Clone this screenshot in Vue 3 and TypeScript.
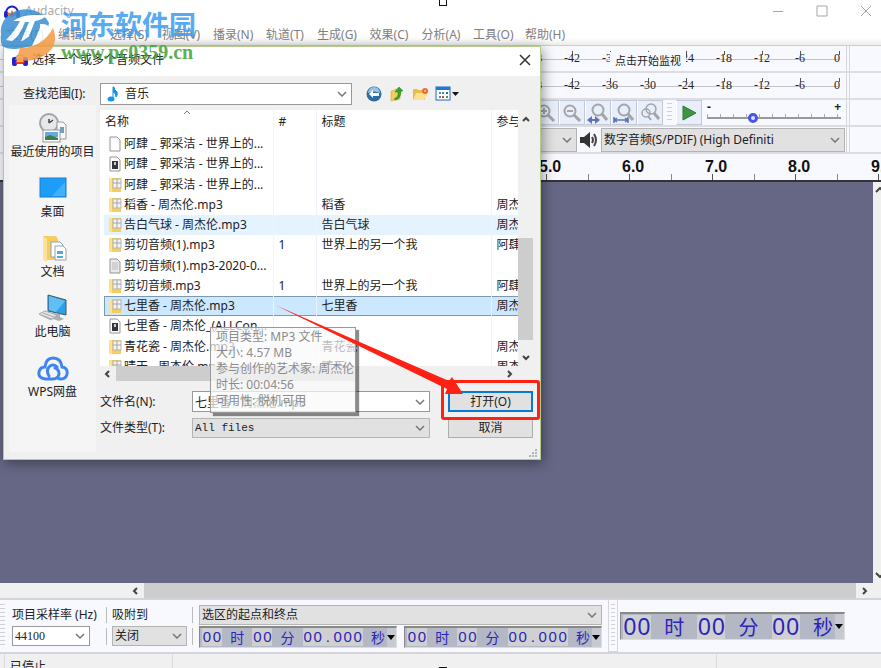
<script setup lang="ts">
import { ref } from 'vue'

type FileKind = 'blank' | 'lyric' | 'text' | 'audio'

interface FileRow {
  name: string
  kind: FileKind
  num: string
  title: string
  artist: string
  state?: 'hover' | 'selected'
}

const menus: string[] = ['文件(F)', '编辑(E)', '选择(S)', '视图(V)', '播录(N)', '轨道(T)', '生成(G)', '效果(C)', '分析(A)', '工具(O)', '帮助(H)']
const levels: string[] = ['-54', '-48', '-42', '-36', '-30', '-24', '-18', '-12', '-6', '0']
const seconds: string[] = ['0.0', '1.0', '2.0', '3.0', '4.0', '5.0', '6.0', '7.0', '8.0', '9.0']
const zooms: string[] = ['in', 'out', 'selection', 'fit', 'toggle']
const places: { id: string; label: string }[] = [
  { id: 'recent', label: '最近使用的项目' },
  { id: 'desktop', label: '桌面' },
  { id: 'documents', label: '文档' },
  { id: 'computer', label: '此电脑' },
  { id: 'cloud', label: 'WPS网盘' },
]

const files: FileRow[] = [
  { name: '阿肆 _ 郭采洁 - 世界上的...', kind: 'blank', num: '', title: '', artist: '' },
  { name: '阿肆 _ 郭采洁 - 世界上的...', kind: 'lyric', num: '', title: '', artist: '' },
  { name: '阿肆 _ 郭采洁 - 世界上的...', kind: 'audio', num: '', title: '', artist: '' },
  { name: '稻香 - 周杰伦.mp3', kind: 'audio', num: '', title: '稻香', artist: '周杰伦' },
  { name: '告白气球 - 周杰伦.mp3', kind: 'audio', num: '', title: '告白气球', artist: '周杰伦', state: 'hover' },
  { name: '剪切音频(1).mp3', kind: 'audio', num: '1', title: '世界上的另一个我', artist: '阿肆' },
  { name: '剪切音频(1).mp3-2020-0...', kind: 'text', num: '', title: '', artist: '' },
  { name: '剪切音频.mp3', kind: 'audio', num: '1', title: '世界上的另一个我', artist: '阿肆' },
  { name: '七里香 - 周杰伦.mp3', kind: 'audio', num: '', title: '七里香', artist: '周杰伦', state: 'selected' },
  { name: '七里香 - 周杰伦_(ALLCon...', kind: 'lyric', num: '', title: '', artist: '' },
  { name: '青花瓷 - 周杰伦.mp3', kind: 'audio', num: '', title: '青花瓷', artist: '周杰伦' },
  { name: '晴天 - 周杰伦.mp3', kind: 'audio', num: '', title: '晴天', artist: '周杰伦' },
]

const details: string[] = ['项目类型: MP3 文件', '大小: 4.57 MB', '参与创作的艺术家: 周杰伦', '时长: 00:04:56', '可用性: 脱机可用']

interface TimePart {
  digits: string
  unit: string
}
const rangeTime: TimePart[] = [
  { digits: '00', unit: '时' },
  { digits: '00', unit: '分' },
  { digits: '00.000', unit: '秒' },
]
const positionTime: TimePart[] = [
  { digits: '00', unit: '时' },
  { digits: '00', unit: '分' },
  { digits: '00', unit: '秒' },
]

const fileName = ref('七里香 - 周杰伦.mp3')
const speed = ref(33)
</script>

<template>
  <main class="app">
    <header class="titlebar">
      <svg class="app-icon" viewBox="0 0 16 16" width="16" height="16">
        <path d="M2 10a6 6.500 0 0 1 12 0" fill="none" stroke="#1c22c8" stroke-width="2" />
        <rect x="0" y="8" width="4" height="7" rx="2" fill="#1c22c8" />
        <rect x="12" y="8" width="4" height="7" rx="2" fill="#1c22c8" />
        <path d="M3 11l2-2 1 2 2-4 2 4 1-2 2 2-2 2-1-1-2 3-2-3-1 1z" fill="#f6651c" />
      </svg>
      <span class="app-name">Audacity</span>
      <div class="window-buttons">
        <button type="button" aria-label="最小化"><svg viewBox="0 0 12 12" width="12" height="12"><path d="M1 6.500h10" /></svg></button>
        <button type="button" aria-label="最大化"><svg viewBox="0 0 12 12" width="12" height="12"><path d="M1 1h10v10h-10z" /></svg></button>
        <button type="button" aria-label="关闭"><svg viewBox="0 0 12 12" width="12" height="12"><path d="M1 1l10 10M11 1l-10 10" /></svg></button>
      </div>
    </header>

    <nav class="menubar">
      <button v-for="m in menus" :key="m" type="button">{{ m }}</button>
    </nav>

    <section class="toolbars">
      <div v-for="row in 2" :key="row" class="bar">
        <div class="bar-body meter">
          <span v-for="l in levels" :key="l" class="level">{{ l }}</span>
          <button v-if="row === 1" type="button" class="monitor">点击开始监视</button>
        </div>
        <i class="bar-end"></i>
      </div>

      <div class="bar">
        <div class="bar-body tools">
          <button v-for="z in zooms" :key="z" type="button" class="tool" :aria-label="z">
            <svg viewBox="0 0 24 24" width="24" height="24" fill="none" stroke="#a4a4a8" stroke-width="2">
              <template v-if="z === 'toggle'">
                <circle cx="8" cy="12" r="4" stroke-width="1.500" />
                <circle cx="13" cy="8" r="5" stroke-width="1.500" />
                <path d="M16 12l5 6" stroke-width="3" />
                <path d="M10 15l3 4" />
              </template>
              <template v-else-if="z === 'in' || z === 'out'">
                <circle cx="10" cy="10" r="5.500" />
                <path d="M14 14l6 6" stroke-width="3" />
                <path d="M7 10h6" />
                <path v-if="z === 'in'" d="M10 7v6" />
              </template>
              <template v-else>
                <circle cx="12" cy="9" r="5.500" />
                <path d="M16 13l5 6" stroke-width="3" />
                <g v-if="z === 'selection'" stroke="none" fill="#5c74b4">
                  <path d="M1 19l5-4v8zM14 19l-5-4v8z" />
                  <path d="M3 18h9v2h-9z" />
                </g>
                <path v-else d="M2 16v6M16 16v6M2 19h14M5 17l-3 2 3 2M13 17l3 2-3 2" stroke="#5c74b4" stroke-width="1.500" />
              </template>
            </svg>
          </button>
          <i class="grip"></i>
          <button type="button" class="tool" aria-label="播放">
            <svg viewBox="0 0 24 24" width="24" height="24"><path d="M6 5l13 7-13 7z" fill="#3f9442" stroke="#2d7a33" /></svg>
          </button>
          <div class="speed">
            <span>-</span><span>+</span>
            <input v-model="speed" type="range" min="0" max="100" aria-label="播放速度" />
          </div>
        </div>
        <i class="bar-end"></i>
      </div>

      <div class="bar">
        <div class="bar-body devices">
          <span class="combo grey host">
            <select aria-label="录制设备"><option>麦克风</option></select>
            <svg class="chev" viewBox="0 0 10 6" width="10" height="6"><path d="M1 1l4 4 4-4" /></svg>
          </span>
          <svg viewBox="0 0 22 20" width="22" height="20">
            <path d="M2 7h4l6-5v16l-6-5h-4z" fill="#333" />
            <path d="M14 7q2 3 0 6M16 4q4 6 0 12" fill="none" stroke="#444" stroke-width="2" />
          </svg>
          <span class="combo grey output">
            <select aria-label="播放设备"><option>数字音频(S/PDIF) (High Definiti</option></select>
            <svg class="chev" viewBox="0 0 10 6" width="10" height="6"><path d="M1 1l4 4 4-4" /></svg>
          </span>
        </div>
        <i class="bar-end"></i>
      </div>
    </section>

    <div class="ruler">
      <div class="seconds"><span v-for="s in seconds" :key="s">{{ s }}</span></div>
      <div class="ticks"></div>
    </div>

    <section class="workspace">
      <div class="tracks"></div>
      <div class="vscroll">
        <svg class="chev dark" viewBox="0 0 10 6" width="10" height="6"><path d="M1 5l4-4 4 4" /></svg>
        <svg class="chev dark" viewBox="0 0 10 6" width="10" height="6"><path d="M1 1l4 4 4-4" /></svg>
      </div>
    </section>

    <div class="hscroll main-scroll">
      <svg class="chev dark" viewBox="0 0 6 10" width="6" height="10"><path d="M5 2l-3 3 3 3" /></svg>
      <i class="thumb"></i>
      <svg class="chev dark" viewBox="0 0 6 10" width="6" height="10"><path d="M1 2l3 3-3 3" /></svg>
    </div>

    <section class="selection-bar">
      <i class="grip"></i>
      <div class="field rate">
        <label for="rate">项目采样率 (Hz)</label>
        <span class="combo">
          <select id="rate"><option>44100</option></select>
          <svg class="chev" viewBox="0 0 10 6" width="10" height="6"><path d="M1 1l4 4 4-4" /></svg>
        </span>
      </div>
      <i class="divider"></i>
      <div class="field snap">
        <label for="snap">吸附到</label>
        <span class="combo grey">
          <select id="snap"><option>关闭</option></select>
          <svg class="chev" viewBox="0 0 10 6" width="10" height="6"><path d="M1 1l4 4 4-4" /></svg>
        </span>
      </div>
      <i class="divider"></i>
      <div class="range">
        <span class="combo grey">
          <select aria-label="选区"><option>选区的起点和终点</option></select>
          <svg class="chev" viewBox="0 0 10 6" width="10" height="6"><path d="M1 1l4 4 4-4" /></svg>
        </span>
        <div class="times">
          <div v-for="n in 2" :key="n" class="time">
            <div class="parts">
              <template v-for="(p, i) in rangeTime" :key="i">
                <span class="digits"><b v-for="(d, k) in p.digits" :key="k">{{ d }}</b></span>
                <span class="unit">{{ p.unit }}</span>
              </template>
            </div>
            <button type="button" aria-label="时间格式"><svg viewBox="0 0 8 5" width="8" height="5"><path d="M0 0h8l-4 5z" /></svg></button>
          </div>
        </div>
      </div>
      <i class="grip boxed"></i>
      <div class="time big">
        <div class="parts">
          <template v-for="(p, i) in positionTime" :key="i">
            <span class="digits"><b v-for="(d, k) in p.digits" :key="k">{{ d }}</b></span>
            <span class="unit">{{ p.unit }}</span>
          </template>
        </div>
        <button type="button" aria-label="时间格式"><svg viewBox="0 0 8 5" width="8" height="5"><path d="M0 0h8l-4 5z" /></svg></button>
      </div>
      <i class="bar-end"></i>
    </section>

    <footer class="status">
      <span class="state">已停止</span>
      <span class="message"></span>
      <span class="extra"></span>
    </footer>

    <section class="dialog" role="dialog" aria-labelledby="dlg-title">
      <header class="dialog-title">
        <svg viewBox="0 0 16 14" width="16" height="14">
          <path d="M2 8a6 6 0 0 1 12 0" fill="none" stroke="#8088dd" />
          <rect x="0" y="4" width="5" height="9" rx="2" fill="#1c22d8" />
          <rect x="11" y="4" width="5" height="9" rx="2" fill="#1c22d8" />
          <path d="M4 9l2-3 2-2 2 2 2 3-2 2h-4z" fill="#ffb52a" />
          <path d="M3 9h10l-2 2h-6z" fill="#ee3b12" />
        </svg>
        <h1 id="dlg-title">选择一个或多个音频文件</h1>
        <button type="button" aria-label="关闭"><svg viewBox="0 0 12 12" width="12" height="12"><path d="M1 1l10 10M11 1l-10 10" /></svg></button>
      </header>

      <div class="lookin">
        <label for="folder">查找范围(I):</label>
        <span class="combo folder">
          <svg viewBox="0 0 12 16" width="12" height="16">
            <ellipse cx="4" cy="13" rx="3.500" ry="2.500" fill="#1496e8" />
            <path d="M6 13v-12h1q0 3 3 5 1 3-1 5 0-4-3-5" fill="#1496e8" stroke="#1496e8" />
          </svg>
          <select id="folder"><option>音乐</option></select>
          <svg class="chev" viewBox="0 0 10 6" width="10" height="6"><path d="M1 1l4 4 4-4" /></svg>
        </span>
        <div class="nav-icons">
          <button type="button" aria-label="后退">
            <svg viewBox="0 0 16 16" width="16" height="16">
              <circle cx="8" cy="8" r="7.500" fill="#2c6ea6" />
              <path d="M2 7a6 6 0 0 1 12 0q-6-3-12 0z" fill="#9cc4e0" />
              <path d="M3 8l4-4v3h6v3h-6v2z" fill="#fff" />
            </svg>
          </button>
          <button type="button" aria-label="向上一级">
            <svg viewBox="0 0 16 16" width="16" height="16">
              <path d="M2 5l4-1v-1h5v10l-9 2z" fill="#f0cd5c" stroke="#c9a235" stroke-width=".5" />
              <path d="M5 13q5-2 4-7h-3l4-5 4 4h-2q0 7-5 9z" fill="#35a32b" stroke="#1e7a1c" stroke-width=".5" />
            </svg>
          </button>
          <button type="button" aria-label="新建文件夹">
            <svg viewBox="0 0 16 16" width="16" height="16">
              <path d="M1 3h4l1 1h7v10h-12z" fill="#e9bd4a" />
              <path d="M1 14l3-7h12l-4 7z" fill="#ffe08c" />
              <circle cx="13" cy="5" r="3" fill="#f2683a" />
              <circle cx="13" cy="5" r="1" fill="#ffd08a" />
            </svg>
          </button>
          <button type="button" class="views" aria-label="查看方式">
            <svg viewBox="0 0 24 16" width="24" height="16">
              <rect x="1" y="1" width="14" height="13" fill="#fff" stroke="#1c68c0" />
              <rect x="1" y="1" width="14" height="3" fill="#1c78dc" />
              <path d="M4 6h2v2h-2zM4 10h2v2h-2z" fill="#5a7ec0" />
              <path d="M7 6h2v2h-2zM11 10h2v2h-2z" fill="#3b9c63" />
              <path d="M11 6h2v2h-2z" fill="#3465a8" />
              <path d="M7 10h2v2h-2z" fill="#d24632" />
              <path d="M17 6h7l-3.500 4z" fill="#111" />
            </svg>
          </button>
        </div>
      </div>

      <div class="dialog-body">
        <nav class="places">
          <button v-for="p in places" :key="p.id" type="button">
            <svg viewBox="0 0 32 32" width="32" height="32">
              <template v-if="p.id === 'recent'">
                <circle cx="12" cy="11" r="9" fill="#e6e8ea" stroke="#9fa4a8" stroke-width="2" />
                <path d="M12 11v-4M12 11l4-3" fill="none" stroke="#444" stroke-width="1.500" />
                <path d="M20 10h6l3 3v14h-9z" fill="#f7f7f7" stroke="#9a9a9a" />
                <path d="M23 15h4v6h-4z" fill="#6d9fc4" />
                <rect x="6" y="18" width="17" height="12" fill="#fff" stroke="#999" />
                <rect x="8" y="20" width="13" height="5" fill="#68aae0" />
                <path d="M8 25l5-2 8 3v2h-13z" fill="#3f7d4c" />
              </template>
              <template v-else-if="p.id === 'desktop'">
                <rect x="3" y="6" width="26" height="19" fill="#1e9df8" stroke="#1580cc" />
                <path d="M15 24l13-14v14z" fill="#43b0fb" />
              </template>
              <template v-else-if="p.id === 'documents'">
                <path d="M6 4h13l2 3v21h-15z" fill="#f3cc62" />
                <path d="M6 4l4 3v23l-4-2z" fill="#ffe296" />
                <path d="M14 10h9l3 3v12h-12z" fill="#fff" stroke="#8fa3b0" />
                <path d="M18 14h8l3 3v11h-11z" fill="#fff" stroke="#8fa3b0" />
                <path d="M20 19h6v3h-6zM20 24h6v2h-6z" fill="#5aa8d8" />
              </template>
              <template v-else-if="p.id === 'computer'">
                <path d="M11 3l18 5v15l-18-4z" fill="#2f9fe8" stroke="#46565f" />
                <path d="M12 4l16 5-9 11-7-2z" fill="#5fc0f8" />
                <path d="M17 21l6 1v3l4 2-5 2-9-3 4-2z" fill="#aab0b4" />
                <path d="M2 22l6-3 12 4-6 5z" fill="#e3e5e7" stroke="#a4a9ad" />
                <path d="M4 23l11 4M6 21l11 4" stroke="#a4a9ad" />
              </template>
              <path v-else d="M20 15q-4-4-8 0-3 4 0 9M8 27q-7-1-6-7 1-5 6-5 1-9 8-9 8 0 9 9 6 1 5 7-1 5-6 5-3 0-3-2M8 27h8q5 0 6-5 0-5-4-6" fill="none" stroke="#3f85f2" stroke-width="3" stroke-linecap="round" />
            </svg>
            <span>{{ p.label }}</span>
          </button>
        </nav>

        <div class="content">
          <div class="list">
            <div class="table-wrap">
              <table>
                <colgroup><col class="c-name" /><col class="c-num" /><col class="c-title" /><col class="c-artist" /></colgroup>
                <thead>
                  <tr>
                    <th>名称<svg class="sort" viewBox="0 0 8 5" width="8" height="5"><path d="M1 4l3-3 3 3" /></svg></th>
                    <th>#</th>
                    <th>标题</th>
                    <th>参与</th>
                  </tr>
                </thead>
                <tbody>
                  <tr v-for="(f, i) in files" :key="i" :class="f.state">
                    <td>
                      <div class="file">
                        <svg viewBox="0 0 14 16" width="14" height="16">
                          <template v-if="f.kind === 'audio'">
                            <path d="M1 1h12v14h-12z" fill="#f5ce60" />
                            <path d="M1 1h3v14h-3z" fill="#ffe18b" />
                            <rect x="5" y="2" width="8" height="9" fill="#f4f4f4" stroke="#b5b5b5" />
                            <path d="M9 2v9M5 6h8" stroke="#a4a4b2" />
                          </template>
                          <template v-else>
                            <path d="M2 1h7l3 3v11h-10z" :fill="f.kind === 'text' ? '#eaeaea' : '#fdfdfd'" stroke="#959595" />
                            <path v-if="f.kind === 'text'" d="M4 5h6M4 7h6M4 9h6M4 11h6" stroke="#bbb" />
                            <rect v-if="f.kind === 'lyric'" x="4" y="5" width="6" height="8" fill="#33373c" />
                            <path v-if="f.kind === 'lyric'" d="M6 6h2v3h-2z" fill="#ccc" />
                          </template>
                        </svg>
                        <span>{{ f.name }}</span>
                      </div>
                    </td>
                    <td>{{ f.num }}</td>
                    <td>{{ f.title }}</td>
                    <td>{{ f.artist }}</td>
                  </tr>
                </tbody>
              </table>
            </div>
            <div class="list-scroll">
              <svg class="chev dark" viewBox="0 0 10 6" width="10" height="6"><path d="M2 5l3-3 3 3" /></svg>
              <i></i>
              <svg class="chev dark" viewBox="0 0 10 6" width="10" height="6"><path d="M2 1l3 3 3-3" /></svg>
            </div>
          </div>
          <div class="hscroll list-hscroll">
            <svg class="chev dark" viewBox="0 0 6 10" width="6" height="10"><path d="M5 2l-3 3 3 3" /></svg>
            <i class="thumb"></i>
            <svg class="chev dark" viewBox="0 0 6 10" width="6" height="10"><path d="M1 2l3 3-3 3" /></svg>
          </div>

          <form class="form" @submit.prevent>
            <label for="fname">文件名(N):</label>
            <span class="combo">
              <input id="fname" v-model="fileName" type="text" />
              <svg class="chev" viewBox="0 0 10 6" width="10" height="6"><path d="M1 1l4 4 4-4" /></svg>
            </span>
            <button type="submit" class="open">打开(O)</button>
            <label for="ftype">文件类型(T):</label>
            <span class="combo grey mono">
              <select id="ftype"><option>All files</option></select>
              <svg class="chev" viewBox="0 0 10 6" width="10" height="6"><path d="M1 1l4 4 4-4" /></svg>
            </span>
            <button type="button">取消</button>
          </form>
        </div>
      </div>
      <svg class="resize" viewBox="0 0 9 9" width="9" height="9"><path d="M6 0h2v2h-2zM3 3h2v2h-2zM6 3h2v2h-2zM0 6h2v2h-2zM3 6h2v2h-2zM6 6h2v2h-2z" fill="#b5b5b5" /></svg>

      <div class="tooltip" role="tooltip">
        <p v-for="d in details" :key="d">{{ d }}</p>
      </div>
    </section>

    <svg class="arrow" viewBox="0 0 190 92" width="190" height="92">
      <path d="M0 0l174 76 3-4 11 17-18 0 2-5z" fill="#ff2114" />
    </svg>
    <i class="frame"></i>

    <div class="watermark">
      <svg viewBox="0 0 58 60" width="58" height="60">
        <path d="M1 30a25 22 0 0 1 48-11q-3 18-18 23-20 6-29 0-2-6-1-12z" fill="#3a8fd2" />
        <path d="M53 24q6 15-5 25-12 10-33 7 4-6 5-12 22 0 33-20z" fill="#f59a45" />
        <path d="M6 36q9-9 14-19h-7q10-7 24-6h11q-6 5-13 6l-8 20h-6l8-19h-4q-5 14-13 19z" fill="#fff" />
        <path d="M40 20q10-1 9 6-4 12-17 16l8-18z" fill="#fff" />
        <path d="M11 40q14-1 24-14l-3 12q-9 7-21 6z" fill="#3a8fd2" />
      </svg>
      <div class="mark-text">
        <strong>河东软件园</strong>
        <span>www.pc0359.cn</span>
      </div>
    </div>

    <i class="handle top"></i>
    <i class="handle bottom"></i>
  </main>
</template>

<style>
body {
  overflow: hidden;
}
</style>

<style scoped>
.app,
.app * {
  box-sizing: border-box;
}
.app {
  position: relative;
  display: flex;
  flex-direction: column;
  height: 100vh;
  overflow: hidden;
  background: #f8f8ff;
  color: #222;
  font: 12px/16px 'Noto Sans', 'Noto Sans CJK SC', sans-serif;
}
button,
select,
input {
  margin: 0;
  padding: 0;
  border: 0;
  background: none;
  color: inherit;
  font: inherit;
  appearance: none;
}
svg {
  display: block;
  flex: none;
}
.chev {
  fill: none;
  stroke: #777;
  stroke-width: 1.500;
}
.chev.dark {
  stroke: #444;
  stroke-width: 2;
}

/* main window chrome */
.titlebar {
  display: flex;
  align-items: center;
  gap: 5px;
  height: 22px;
  padding: 0 9px 0 4px;
  background: #fff;
  color: #aaa;
}
.window-buttons {
  display: flex;
  gap: 32px;
  margin-left: auto;
}
.window-buttons svg {
  fill: none;
  stroke: #a5a5a5;
}
.menubar {
  display: flex;
  gap: 12px;
  height: 24px;
  padding: 4px 5px 0;
  background: linear-gradient(#fff 70%, #ececec);
  border-bottom: 1px solid #ccc;
  color: #808080;
}
.menubar button {
  width: 40px;
  height: 18px;
  white-space: nowrap;
}
.bar {
  display: flex;
  height: 27px;
  border-bottom: 2px solid #dcdce2;
}
.bar-body {
  position: relative;
  display: flex;
  flex: 1;
  justify-content: flex-end;
  min-width: 0;
}
.bar-end {
  flex: none;
  width: 4px;
  margin: 0 31px 0 0;
  border: solid #d4d4da;
  border-width: 0 1px;
}
.meter {
  padding-right: 6px;
  font: 12px/25px 'Liberation Serif', serif;
  background: linear-gradient(#c4c4c8, #c4c4c8) 0 13px / calc(100% - 8px) 1px no-repeat;
}
.level {
  width: 38px;
  text-align: center;
  color: #222;
  background: linear-gradient(#555, #555) 50% 5px / 1px 4px no-repeat;
}
.level:last-of-type {
  width: 21px;
  text-align: right;
  background-position: 100% 5px;
}
.monitor {
  position: absolute;
  right: 160px;
  top: 6px;
  width: 76px;
  height: 16px;
  background: #f8f8ff;
  font: 11px/16px 'Noto Sans CJK SC', sans-serif;
}
.tools {
  align-items: center;
  padding-right: 5px;
}
.tool {
  width: 26px;
  height: 25px;
  border: 1px solid #c3c9d4;
  border-left-color: #fff;
  background: #e8effb;
}
.grip {
  flex: none;
  width: 5px;
  height: 20px;
  margin: 0 4px;
  background: repeating-linear-gradient(#d0d0d6 0 1px, transparent 1px 4px);
}
.speed {
  display: grid;
  grid-template-columns: 1fr auto;
  width: 134px;
  margin-left: 5px;
  font-weight: bold;
  line-height: 10px;
}
.speed input {
  grid-column: 1 / 3;
  width: 100%;
  height: 12px;
  background: linear-gradient(#999, #999) 0 5px / 100% 2px no-repeat, repeating-linear-gradient(90deg, #aaa 0 1px, transparent 1px 13px) 0 2px / 100% 4px no-repeat;
}
.speed input::-webkit-slider-thumb {
  appearance: none;
  width: 10px;
  height: 10px;
  border: 3px solid #4454ee;
  border-radius: 50%;
  background: #dfe3ff;
}
.combo {
  display: flex;
  align-items: center;
  height: 20px;
  min-width: 0;
  padding: 0 4px 0 2px;
  border: 1px solid #999;
  background: #fff;
}
.combo.grey {
  background: #e1e1e1;
  border-color: #b4b4b4;
}
.combo select,
.combo input {
  flex: 1;
  width: 0;
  min-width: 0;
  height: 100%;
  outline: 0;
}
.devices {
  align-items: center;
  gap: 1px;
  padding-right: 1px;
}
.devices .combo {
  height: 24px;
}
.host {
  width: 240px;
}
.output {
  width: 244px;
}

/* timeline and tracks */
.ruler {
  height: 28px;
  overflow: hidden;
  border-bottom: 2px solid #333;
}
.seconds {
  display: flex;
  height: 20px;
  padding-left: 124px;
  font: bold 16px/26px 'Liberation Sans', sans-serif;
  color: #111;
}
.seconds span {
  flex: none;
  width: 83px;
}
.ticks {
  height: 6px;
  margin-left: 131px;
  background: repeating-linear-gradient(90deg, #555 0 1px, transparent 1px 83px), repeating-linear-gradient(90deg, transparent 0 42px, #888 42px 43px, transparent 43px 83px) 0 3px;
}
.workspace {
  display: flex;
  flex: 1;
  min-height: 0;
}
.tracks {
  flex: 1;
  background: #656785;
}
.vscroll {
  display: flex;
  flex-direction: column;
  justify-content: space-between;
  width: 8px;
  padding: 5px 0 5px 2px;
  overflow: hidden;
  background: #f0f0f0;
}
.hscroll {
  display: flex;
  align-items: center;
  gap: 6px;
  height: 15px;
  background: #f0f0f0;
}
.hscroll .thumb {
  flex: 1;
  height: 100%;
  background: #cdcdcd;
}
.main-scroll {
  padding: 0 13px 0 132px;
}

/* selection toolbar */
.selection-bar {
  display: flex;
  align-items: center;
  height: 56px;
  border: solid #d4d4da;
  border-width: 2px 0;
}
.selection-bar > .grip {
  height: 44px;
  margin: 0 7px 0 0;
}
.field {
  display: grid;
  grid-template-rows: 20px 20px;
  align-content: center;
  white-space: nowrap;
}
.field label {
  line-height: 18px;
}
.rate {
  width: 89px;
}
.rate .combo {
  width: 78px;
  font-family: 'Liberation Serif', serif;
}
.snap {
  width: 75px;
}
.divider {
  width: 1px;
  height: 38px;
  margin: 0 5px;
  background: linear-gradient(#bbb 16px, transparent 16px 21px, #bbb 21px);
}
.range {
  flex: 1;
  margin-left: 1px;
}
.times {
  display: flex;
  justify-content: space-between;
  margin-top: 1px;
}
.time {
  display: flex;
  align-items: center;
  gap: 2px;
  width: 198px;
  height: 22px;
  padding-left: 2px;
  border: 1px solid #ddd;
  border-top: 2px solid #888;
  border-left-color: #888;
  background: #b3b8c4;
  color: #2a24bc;
}
.parts {
  display: flex;
  flex: 1;
  align-items: center;
  justify-content: space-between;
}
.digits {
  display: flex;
  background: #d0d0d0;
}
.digits b {
  width: 10px;
  text-align: center;
  font: 15px/18px 'Liberation Sans', sans-serif;
}
.unit {
  font: 14px/18px 'Noto Sans CJK SC', sans-serif;
}
.time button {
  width: 9px;
  height: 100%;
  background: #c6c9d2;
}
.selection-bar > .grip.boxed {
  width: 10px;
  height: 52px;
  margin: 0 2px 0 6px;
  border: solid #d4d4da;
  border-width: 0 1px 1px;
  background-clip: content-box;
  padding: 4px 2px;
}
.time.big {
  width: 225px;
  height: 28px;
  margin-right: 1px;
}
.big .digits b {
  width: 14px;
  font-size: 23px;
  line-height: 24px;
}
.big .unit {
  font-size: 20px;
  line-height: 24px;
}
.status {
  display: flex;
  flex: none;
  height: 14px;
  padding-left: 4px;
  background: #f0f0f0;
}
.status span {
  padding: 5px 5px 0;
  border-left: 1px solid #dadada;
}
.state {
  width: 168px;
}
.message {
  flex: 1;
}
.extra {
  width: 165px;
}

/* file dialog */
.dialog {
  position: absolute;
  left: 3px;
  top: 46px;
  width: 538px;
  border: 1px solid #b5cb8c;
  background: #f0f0f0;
  box-shadow: 2px 3px 12px rgba(0, 0, 0, 0.4);
}
.dialog-title {
  display: flex;
  align-items: center;
  gap: 4px;
  height: 29px;
  padding: 0 9px 3px 8px;
  background: #fff;
}
.dialog-title h1 {
  margin: 0;
  font: inherit;
}
.dialog-title button {
  margin-left: auto;
}
.dialog-title button svg {
  fill: none;
  stroke: #333;
  stroke-width: 1.500;
}
.lookin {
  display: flex;
  align-items: center;
  height: 29px;
  padding: 7px 0 0 19px;
}
.lookin label {
  width: 77px;
}
.folder {
  width: 252px;
  height: 22px;
  padding-left: 6px;
  gap: 6px;
}
.nav-icons {
  display: flex;
  gap: 7px;
  margin-left: 14px;
}
.dialog-body {
  display: flex;
  padding: 0 7px 7px 5px;
}
.places {
  width: 87px;
  margin-right: 4px;
  padding-top: 3px;
  background: #f5f5f5;
}
.places button {
  display: flex;
  flex-direction: column;
  align-items: center;
  width: 100%;
  height: 60px;
  padding-top: 4px;
  white-space: nowrap;
}
.content {
  flex: 1;
  min-width: 0;
  padding: 5px 0 14px;
}
.list {
  display: flex;
  height: 256px;
}
.table-wrap {
  flex: 1;
  min-width: 0;
  overflow: hidden;
  padding-left: 4px;
  background: #fff;
}
table {
  width: 434px;
  height: 267px;
  table-layout: fixed;
  border-collapse: collapse;
}
.c-name {
  width: 169px;
}
.c-num {
  width: 43px;
}
.c-title {
  width: 175px;
}
th,
td {
  padding: 0 0 0 5px;
  border-left: 1px solid #eef4fa;
  text-align: left;
  font-weight: normal;
  white-space: nowrap;
  overflow: hidden;
}
th {
  position: relative;
  height: 24px;
}
th:first-child,
td:first-child {
  border-left: 0;
}
th:first-child {
  padding-left: 1px;
}
.sort {
  position: absolute;
  left: 79px;
  top: 0;
  fill: none;
  stroke: #777;
}
.file {
  display: flex;
  align-items: center;
  gap: 2px;
}
td:first-child {
  padding-left: 4px;
}
.hover td {
  background: #e5f3ff;
}
.selected td {
  background: #cce8ff;
  box-shadow: inset 0 1px #7d99b0, inset 0 -1px #7d99b0;
}
.selected td:first-child {
  box-shadow: inset 1px 1px #7d99b0, inset 0 -1px #7d99b0;
}
.list-scroll {
  display: flex;
  flex-direction: column;
  align-items: center;
  justify-content: space-between;
  width: 15px;
  padding: 6px 0 5px;
}
.list-scroll i {
  width: 100%;
  height: 102px;
  margin-top: 100px;
  background: #cdcdcd;
}
.list-hscroll {
  margin-right: 15px;
  padding: 0 5px 0 4px;
}
.list-hscroll .thumb {
  max-width: 240px;
}
.list-hscroll .chev:last-child {
  margin-left: auto;
}
.form {
  display: grid;
  grid-template-columns: 92px 1fr 85px;
  grid-template-rows: 21px 20px;
  align-items: center;
  row-gap: 6px;
  margin-top: 10px;
}
.form .combo {
  height: 100%;
  margin-right: 18px;
}
.mono {
  font: 11px/16px 'Liberation Mono', monospace;
}
.form button {
  height: 100%;
  border: 1px solid #adadad;
  background: #e1e1e1;
}
.form .open {
  border: 2px solid #0a78d7;
}
.resize {
  position: absolute;
  right: 2px;
  bottom: 1px;
}
.tooltip {
  position: absolute;
  left: 206px;
  top: 280px;
  padding: 1px 1px 3px 5px;
  border: 1px solid #999;
  background: rgba(250, 250, 250, 0.72);
  box-shadow: 3px 3px 1px rgba(0, 0, 0, 0.45);
  color: #8c8c8c;
  white-space: nowrap;
}
.tooltip p {
  margin: 0;
}

/* annotations */
.arrow {
  position: absolute;
  left: 275px;
  top: 305px;
}
.frame {
  position: absolute;
  left: 441px;
  top: 380px;
  width: 99px;
  height: 40px;
  border: 3px solid #ff2114;
  border-radius: 3px;
}
.watermark {
  position: absolute;
  left: 0;
  top: 4px;
  display: flex;
  gap: 3px;
  opacity: 0.85;
}
.mark-text {
  display: flex;
  flex-direction: column;
}
.mark-text strong {
  font: bold 27px/40px 'Noto Sans CJK SC', sans-serif;
  color: #3b9df0;
}
.mark-text span {
  font: bold 20px/16px 'Liberation Serif', serif;
  color: #44a03c;
}
.handle {
  position: absolute;
  left: 439px;
  width: 8px;
  height: 8px;
  border: 1px solid #111;
  background: #fff;
}
.handle.top {
  top: -2px;
}
.handle.bottom {
  bottom: -7px;
}
</style>
